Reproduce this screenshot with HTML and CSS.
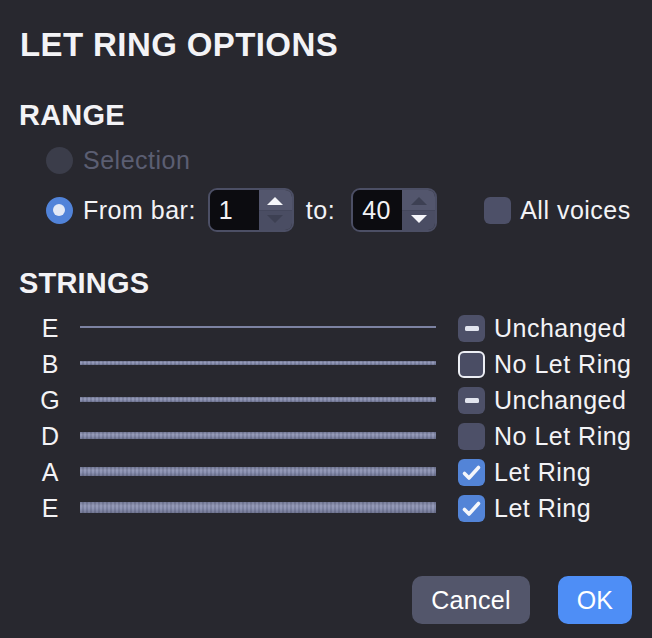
FILE: index.html
```html
<!DOCTYPE html>
<html>
<head>
<meta charset="utf-8">
<link rel="stylesheet" href="styles.css">
</head>
<body>
<div class="dialog">
  <h1 class="title">LET RING OPTIONS</h1>

  <h2 class="section">RANGE</h2>
  <div class="range">
    <div class="row">
      <span class="radio radio-disabled"></span>
      <span class="label label-dim">Selection</span>
    </div>
    <div class="row">
      <span class="radio radio-on"></span>
      <span class="label">From bar:</span>
      <div class="spin spin-from">
        <span class="spin-val">1</span>
        <span class="spin-btns">
          <span class="spin-btn"><span class="arrow-up arrow-on"></span></span>
          <span class="spin-btn spin-btn-low"><span class="arrow-down"></span></span>
        </span>
      </div>
      <span class="label label-to">to:</span>
      <div class="spin spin-to">
        <span class="spin-val">40</span>
        <span class="spin-btns">
          <span class="spin-btn"><span class="arrow-up"></span></span>
          <span class="spin-btn spin-btn-low"><span class="arrow-down arrow-on"></span></span>
        </span>
      </div>
      <span class="check check-voices"></span>
      <span class="label label-check">All voices</span>
    </div>
  </div>

  <h2 class="section section-strings">STRINGS</h2>
  <div class="strings">
    <div class="string-row">
      <span class="letter">E</span>
      <span class="string string-1"></span>
      <span class="check check-mixed"><span class="minus"></span></span>
      <span class="label label-check">Unchanged</span>
    </div>
    <div class="string-row">
      <span class="letter">B</span>
      <span class="string string-2"></span>
      <span class="check check-focus"></span>
      <span class="label label-check">No Let Ring</span>
    </div>
    <div class="string-row">
      <span class="letter">G</span>
      <span class="string string-3"></span>
      <span class="check check-mixed"><span class="minus"></span></span>
      <span class="label label-check">Unchanged</span>
    </div>
    <div class="string-row">
      <span class="letter">D</span>
      <span class="string string-4"></span>
      <span class="check"></span>
      <span class="label label-check">No Let Ring</span>
    </div>
    <div class="string-row">
      <span class="letter">A</span>
      <span class="string string-5"></span>
      <span class="check check-on">
        <svg viewBox="0 0 27 27" width="27" height="27"><path d="M6.5 14.5 L11 19 L20.5 8.5" fill="none" stroke="#f4f6fb" stroke-width="3.6" stroke-linecap="round" stroke-linejoin="round"/></svg>
      </span>
      <span class="label label-check">Let Ring</span>
    </div>
    <div class="string-row">
      <span class="letter">E</span>
      <span class="string string-6"></span>
      <span class="check check-on">
        <svg viewBox="0 0 27 27" width="27" height="27"><path d="M6.5 14.5 L11 19 L20.5 8.5" fill="none" stroke="#f4f6fb" stroke-width="3.6" stroke-linecap="round" stroke-linejoin="round"/></svg>
      </span>
      <span class="label label-check">Let Ring</span>
    </div>
  </div>

  <div class="footer">
    <button class="btn btn-cancel">Cancel</button>
    <button class="btn btn-ok">OK</button>
  </div>
</div>
</body>
</html>
```

FILE: styles.css
```css
html, body {
  margin: 0;
  padding: 0;
  background: #28282f;
}

body {
  font-family: "Liberation Sans", Arial, Helvetica, sans-serif;
  color: #f3f3f6;
}

.dialog {
  width: 652px;
  height: 638px;
  box-sizing: border-box;
  padding: 0 20px;
  overflow: hidden;
}

.title {
  margin: 25px 0 0;
  font-size: 33px;
  line-height: 40px;
  font-weight: 700;
  letter-spacing: 0.4px;
}

.section {
  margin: 33px 0 0 -1px;
  font-size: 29px;
  line-height: 34px;
  font-weight: 700;
  letter-spacing: 0.2px;
}

.section-strings {
  margin-top: 34px;
}

.range {
  margin-top: 6px;
  display: flex;
  flex-direction: column;
  gap: 6px;
}

.row {
  height: 44px;
  display: flex;
  align-items: center;
}

.label {
  font-size: 25px;
  line-height: 30px;
  white-space: nowrap;
  letter-spacing: 0.5px;
}

.label-dim {
  color: #5b5e72;
}

.radio {
  width: 27px;
  height: 27px;
  border-radius: 50%;
  margin-left: 26px;
  margin-right: 10px;
  box-sizing: border-box;
  flex: none;
}

.radio-disabled {
  background: #3b3d4a;
}

.radio-on {
  background: #5183d9;
  border: 7.5px solid #5183d9;
}

.radio-on::after {
  content: "";
  display: block;
  width: 12px;
  height: 12px;
  border-radius: 50%;
  background: #e3e9f6;
}

.spin {
  display: flex;
  width: 86px;
  height: 44px;
  box-sizing: border-box;
  border: 2px solid #4c4f65;
  border-radius: 9px;
  overflow: hidden;
  flex: none;
}

.spin-from {
  margin-left: 12px;
}

.spin-to {
  margin-left: 16px;
}

.spin-val {
  width: 49px;
  background: #0c0c10;
  font-size: 25px;
  line-height: 40px;
  padding-left: 9px;
  box-sizing: border-box;
  letter-spacing: 0.5px;
}

.spin-btns {
  flex: 1;
  display: flex;
  flex-direction: column;
}

.spin-btn {
  flex: 1;
  display: flex;
  align-items: center;
  justify-content: center;
  background: #53566d;
}

.spin-btn-low {
  background: #4a4d63;
  border-top: 1px solid #44475c;
}

.arrow-up {
  width: 0;
  height: 0;
  border-left: 8px solid transparent;
  border-right: 8px solid transparent;
  border-bottom: 8px solid #3d4053;
  margin-top: 2px;
}

.arrow-down {
  width: 0;
  height: 0;
  border-left: 8px solid transparent;
  border-right: 8px solid transparent;
  border-top: 8px solid #3d4053;
  margin-bottom: 2px;
}

.arrow-up.arrow-on {
  border-bottom-color: #f5f6fa;
}

.arrow-down.arrow-on {
  border-top-color: #f5f6fa;
}

.label-to {
  margin-left: 12px;
}

.check {
  width: 27px;
  height: 27px;
  border-radius: 6px;
  background: #4d5068;
  box-sizing: border-box;
  flex: none;
  display: flex;
  align-items: center;
  justify-content: center;
}

.check-voices {
  margin-left: 47px;
}

.label-check {
  margin-left: 9px;
}

.check-mixed .minus {
  width: 14px;
  height: 5px;
  border-radius: 1.5px;
  background: #e1e4ee;
}

.check-focus {
  border: 2px solid #eceef4;
  background: #4a4d64;
}

.check-on {
  background: #5384d7;
}

.check-on svg {
  display: block;
}

.strings {
  margin-top: 10px;
  display: flex;
  flex-direction: column;
}

.string-row {
  height: 36px;
  display: flex;
  align-items: center;
}

.letter {
  width: 60px;
  text-align: center;
  font-size: 25px;
  line-height: 30px;
  flex: none;
}

.string {
  width: 356px;
  flex: none;
  margin-right: 22px;
  margin-top: -2px;
  background:
    linear-gradient(to bottom, rgba(30,32,48,0.2), rgba(255,255,255,0.08) 35%, rgba(255,255,255,0) 60%, rgba(30,32,48,0.25)),
    repeating-linear-gradient(90deg, #8d93b3 0 2px, #7a809f 2px 4px);
}

.string-1 {
  height: 2px;
  background: #7c82a2;
}

.string-2 { height: 4px; }
.string-3 { height: 5px; }
.string-4 { height: 7px; }
.string-5 { height: 9px; }
.string-6 { height: 11px; }

.footer {
  margin-top: 50px;
  display: flex;
  justify-content: flex-end;
  gap: 28px;
}

.btn {
  height: 48px;
  border: none;
  border-radius: 10px;
  font-family: "Liberation Sans", Arial, Helvetica, sans-serif;
  font-size: 25px;
  letter-spacing: 0.3px;
  color: #ffffff;
  padding: 0;
}

.btn-cancel {
  width: 118px;
  background: #53566b;
}

.btn-ok {
  width: 74px;
  background: #4e8ef6;
}
```
